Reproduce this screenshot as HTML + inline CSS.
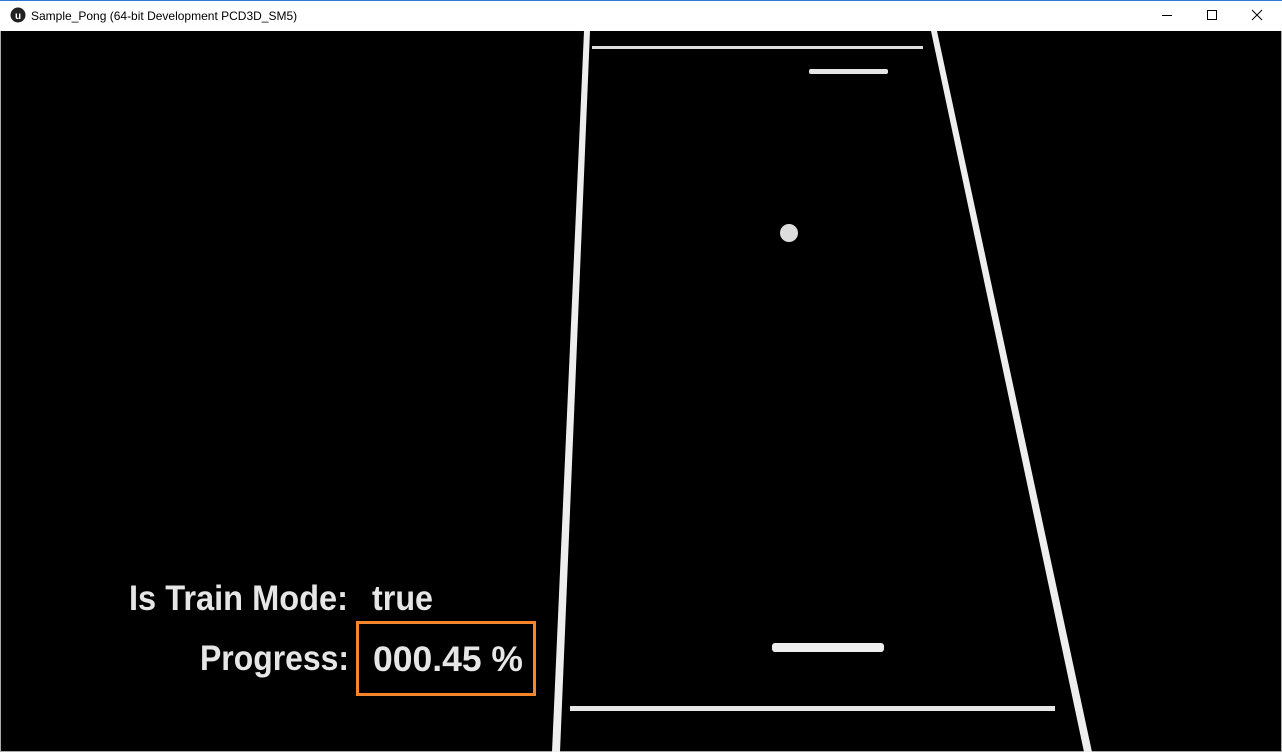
<!DOCTYPE html>
<html><head><style>
html,body{margin:0;padding:0;width:1282px;height:752px;overflow:hidden;background:#fff;font-family:"Liberation Sans",sans-serif}
</style></head><body>
<svg width="1282" height="752" xmlns="http://www.w3.org/2000/svg" style="position:absolute;left:0;top:0">
<rect x="0" y="0" width="1282" height="31" fill="#fff"/>
<rect x="0" y="0" width="1282" height="1" fill="#2b79d8"/>
<rect x="0" y="31" width="1282" height="721" fill="#000"/>
<rect x="0" y="31" width="1" height="721" fill="#aaa"/>
<rect x="1281" y="31" width="1" height="721" fill="#aaa"/>
<rect x="0" y="751" width="1282" height="1" fill="#aaa"/>
<circle cx="18" cy="15" r="7.5" fill="#222"/>
<text x="15" y="19" font-size="10" fill="#fff" font-weight="bold">u</text>
<text x="31" y="20" font-size="12" fill="#000" font-family="Liberation Sans, sans-serif">Sample_Pong (64-bit Development PCD3D_SM5)</text>
<line x1="1162" y1="15.5" x2="1172" y2="15.5" stroke="#000" stroke-width="1"/>
<rect x="1207.5" y="10.5" width="9" height="9" fill="none" stroke="#000"/>
<path d="M1252 10 L1262 20 M1262 10 L1252 20" stroke="#000" stroke-width="1"/>
<polygon points="584,31 590,31 560,752 552,752" fill="#eee"/>
<polygon points="931,31 937,31 1092,752 1084,752" fill="#eee"/>
<rect x="592" y="46" width="331" height="3" fill="#ddd"/>
<rect x="809" y="69" width="79" height="5" rx="2" fill="#e6e6e6"/>
<circle cx="789" cy="233" r="9" fill="#ddd"/>
<rect x="772" y="643" width="112" height="9" rx="3" fill="#eee"/>
<rect x="570" y="706" width="485" height="5" fill="#e6e6e6"/>
<text x="129" y="610" font-size="35" font-weight="bold" fill="#e6e6e6" textLength="219" lengthAdjust="spacingAndGlyphs">Is Train Mode:</text>
<text x="372" y="610" font-size="35" font-weight="bold" fill="#e6e6e6" textLength="61" lengthAdjust="spacingAndGlyphs">true</text>
<text x="200" y="670" font-size="35" font-weight="bold" fill="#e6e6e6" textLength="149" lengthAdjust="spacingAndGlyphs">Progress:</text>
<text x="373" y="671" font-size="35" font-weight="bold" fill="#e6e6e6" textLength="150" lengthAdjust="spacingAndGlyphs">000.45 %</text>
<rect x="357.5" y="622.5" width="177" height="72" fill="none" stroke="#f5862e" stroke-width="3"/>
</svg>
</body></html>
